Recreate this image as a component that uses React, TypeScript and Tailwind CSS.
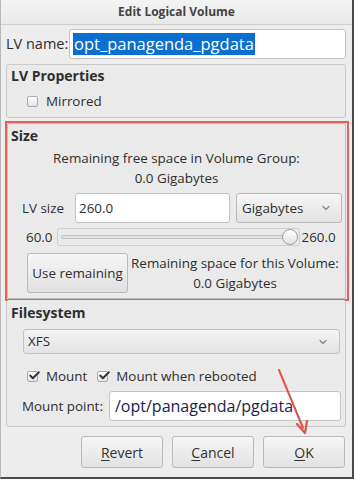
import { ChevronDown, Check } from "lucide-react";

const font = { fontFamily: '"Open Sans", "Noto Sans", "DejaVu Sans", sans-serif' };

function CheckBox({ checked }: { checked?: boolean }) {
  return (
    <span className="relative inline-flex h-[11px] w-[11px] items-center justify-center rounded-[2px] border border-[#a9a9a9] bg-gradient-to-b from-[#fdfdfd] to-[#e4e4e4]">
      {checked && (
        <Check className="absolute -top-[3px] left-[0px] h-[13px] w-[13px] text-[#333]" strokeWidth={3.5} />
      )}
    </span>
  );
}

function Button({ label }: { label: string }) {
  return (
    <div className="flex h-[32px] w-[82px] items-center justify-center rounded-[3px] border border-[#b9b9b9] bg-gradient-to-b from-[#f6f6f6] to-[#e2e2e2] text-[14px] text-[#333]">
      <span>
        <span className="underline underline-offset-2">{label[0]}</span>
        {label.slice(1)}
      </span>
    </div>
  );
}

export default function App() {
  return (
    <div
      style={font}
      className="relative flex h-[479px] w-[354px] flex-col overflow-hidden whitespace-nowrap border-b-2 border-l border-r-2 border-b-[#4a4a4a] border-l-[#b8b8b8] border-r-[#4a4a4a] bg-[#ededed] text-[13.4px] text-[#2e2e2e]"
    >
      {/* title bar */}
      <div className="flex h-[25px] shrink-0 items-center justify-center border-b border-[#cfcfcf] bg-gradient-to-b from-[#f4f4f4] to-[#e9e9e9] text-[12px] font-bold text-[#444]">
        Edit Logical Volume
      </div>

      <div className="flex flex-col pl-[5px] pr-[6px]">
        {/* LV name */}
        <div className="mt-[4px] flex h-[30px] items-center">
          <span className="w-[63px] text-[14.5px]">LV name:</span>
          <div className="flex h-[30px] flex-1 items-center rounded-[3px] border border-[#c4c4c4] bg-white pl-[3px]">
            <span className="bg-[#0b6fd0] px-[1px] text-[16.5px] leading-[22px] text-white">opt_panagenda_pgdata</span>
          </div>
        </div>

        {/* LV properties */}
        <div className="mt-[5px] h-[54px] rounded-[3px] border border-[#c8c8c8] bg-[#eaeaea] px-[4px]">
          <div className="mt-[2px] text-[14px] font-bold leading-[18px]">LV Properties</div>
          <div className="mt-[6px] flex items-center gap-[8px] pl-[16px]">
            <CheckBox />
            <span>Mirrored</span>
          </div>
        </div>

        {/* Size */}
        <div className="-ml-[1px] -mr-[3px] mt-[3px] border-2 border-[#e0625b]">
          <div className="mr-[1px] h-[176px] rounded-[2px] border border-[#bdbdbd] bg-[#eaeaea] px-[3px]">
            <div className="mt-[3px] text-[14px] font-bold leading-[18px]">Size</div>
            <div className="mt-[3px] text-center leading-[20px]">
              Remaining free space in Volume Group:
              <br />
              0.0 Gigabytes
            </div>
            <div className="mt-[5px] flex h-[30px] items-center pl-[11px]">
              <span className="w-[53px]">LV size</span>
              <div className="flex h-[30px] w-[155px] items-center rounded-[3px] border border-[#c4c4c4] bg-white pl-[3px]">
                260.0
              </div>
              <div className="ml-[6px] flex h-[30px] flex-1 items-center justify-between rounded-[3px] border border-[#b9b9b9] bg-gradient-to-b from-[#f6f6f6] to-[#e2e2e2] pl-[5px] pr-[9px]">
                Gigabytes
                <ChevronDown className="h-[12px] w-[12px] text-[#888]" strokeWidth={2.5} />
              </div>
            </div>
            <div className="mt-[4px] flex h-[20px] items-center pl-[15px]">
              <span>60.0</span>
              <div className="relative ml-[4px] flex h-[18px] w-[243px] items-center rounded-[2px] border border-[#cfcfcf]">
                <div className="mx-[3px] h-[4px] flex-1 rounded-full border border-[#c3c3c3] bg-[#e3e3e3]" />
                <div className="absolute right-[1px] top-[0px] h-[16px] w-[16px] rounded-full border border-[#9d9d9d] bg-gradient-to-b from-[#ffffff] to-[#e1e1e1]" />
              </div>
              <span className="ml-[2px]">260.0</span>
            </div>
            <div className="mt-[6px] flex pl-[16px]">
              <div className="flex h-[40px] w-[101px] items-center justify-center rounded-[3px] border border-[#b9b9b9] bg-gradient-to-b from-[#f6f6f6] to-[#e0e0e0]">
                Use remaining
              </div>
              <div className="flex-1 text-center leading-[20px]">
                Remaining space for this Volume:
                <br />
                0.0 Gigabytes
              </div>
            </div>
          </div>
        </div>

        {/* Filesystem */}
        <div className="-mt-[1px] h-[127px] rounded-[3px] border border-t-0 border-[#c8c8c8] bg-[#eaeaea] px-[4px]">
          <div className="mt-[4px] text-[14px] font-bold leading-[18px]">Filesystem</div>
          <div className="ml-[12px] mr-[1px] mt-[7px] flex h-[25px] items-center justify-between rounded-[3px] border border-[#c2c2c2] bg-gradient-to-b from-[#f4f4f4] to-[#e3e3e3] pl-[4px] pr-[10px]">
            XFS
            <ChevronDown className="h-[12px] w-[12px] text-[#888]" strokeWidth={2.5} />
          </div>
          <div className="mt-[12px] flex items-center pl-[16px]">
            <CheckBox checked />
            <span className="ml-[8px]">Mount</span>
            <span className="ml-[10px] inline-flex">
              <CheckBox checked />
            </span>
            <span className="ml-[8px]">Mount when rebooted</span>
          </div>
          <div className="mt-[5px] flex h-[30px] items-center pl-[11px]">
            <span className="w-[87px]">Mount point:</span>
            <div className="flex h-[30px] flex-1 items-center rounded-[3px] border border-[#c4c4c4] bg-white pl-[5px] text-[16px] text-[#1c1c4c]">
              /opt/panagenda/pgdata
            </div>
          </div>
        </div>

        {/* buttons */}
        <div className="mt-[9px] flex justify-end gap-[9px] pr-[1px]">
          <Button label="Revert" />
          <Button label="Cancel" />
          <Button label="OK" />
        </div>
      </div>

      {/* annotation arrow */}
      <svg className="pointer-events-none absolute left-0 top-0" width="354" height="479">
        <line x1="278" y1="370" x2="302" y2="428" stroke="#e0524a" strokeWidth="2" strokeLinecap="round" />
        <path d="M296 424 L304 433 L306 421" fill="none" stroke="#e0524a" strokeWidth="2.2" strokeLinecap="round" strokeLinejoin="round" />
      </svg>
    </div>
  );
}
